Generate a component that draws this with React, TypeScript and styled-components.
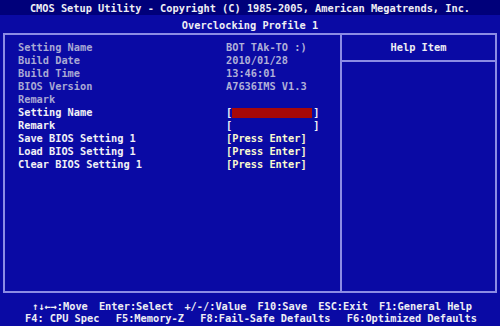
import styled, { createGlobalStyle } from "styled-components";

const GlobalStyle = createGlobalStyle`
  body {
    margin: 0;
    background: #0a0aa4;
  }
`;

const rows = [
  { label: "Setting Name", value: "BOT TAk-TO :)", dim: true },
  { label: "Build Date", value: "2010/01/28", dim: true },
  { label: "Build Time", value: "13:46:01", dim: true },
  { label: "BIOS Version", value: "A7636IMS V1.3", dim: true },
  { label: "Remark", value: "", dim: true },
];

const footerTop = ["↑↓←→:Move", "Enter:Select", "+/-/:Value", "F10:Save", "ESC:Exit", "F1:General Help"];
const footerBottom = ["F4: CPU Spec", "F5:Memory-Z", "F8:Fail-Safe Defaults", "F6:Optimized Defaults"];

const App = () => {
  return (
    <Screen>
      <GlobalStyle />
      <TitleBar>CMOS Setup Utility - Copyright (C) 1985-2005, American Megatrends, Inc.</TitleBar>
      <SubTitle>Overclocking Profile 1</SubTitle>
      <Frame>
        <MainPanel>
          {rows.map((r) => (
            <Row key={r.label}>
              <Label $dim={r.dim}>{r.label}</Label>
              <Value $dim={r.dim}>{r.value}</Value>
            </Row>
          ))}
          <Row>
            <Label>Setting Name</Label>
            <Value>
              [<Field $filled />]
            </Value>
          </Row>
          <Row>
            <Label>Remark</Label>
            <Value>
              [<Field />]
            </Value>
          </Row>
          <Row>
            <Label>Save BIOS Setting 1</Label>
            <Value $action>[Press Enter]</Value>
          </Row>
          <Row>
            <Label>Load BIOS Setting 1</Label>
            <Value $action>[Press Enter]</Value>
          </Row>
          <Row>
            <Label>Clear BIOS Setting 1</Label>
            <Value $action>[Press Enter]</Value>
          </Row>
        </MainPanel>
        <HelpPanel>
          <HelpTitle>Help Item</HelpTitle>
        </HelpPanel>
      </Frame>
      <Footer>
        <FooterLine $pad="0 28px 0 32px">
          {footerTop.map((t) => (
            <span key={t}>{t}</span>
          ))}
        </FooterLine>
        <FooterLine $pad="0 23px 0 25px">
          {footerBottom.map((t) => (
            <span key={t}>{t}</span>
          ))}
        </FooterLine>
      </Footer>
    </Screen>
  );
};

const Screen = styled.div`
  width: 500px;
  height: 326px;
  background: #0a0aa4;
  display: flex;
  flex-direction: column;
  font-family: "DejaVu Sans Mono", "Liberation Mono", monospace;
  font-weight: bold;
  font-size: 10.3px;
  color: #eeeef4;
  white-space: pre;
  overflow: hidden;
`;

const TitleBar = styled.div`
  height: 15px;
  line-height: 16px;
  background: #00007a;
  text-align: center;
`;

const SubTitle = styled.div`
  height: 18px;
  line-height: 16px;
  padding-top: 2px;
  box-sizing: border-box;
  text-align: center;
`;

const Frame = styled.div`
  margin: 0 3px;
  height: 260px;
  box-sizing: border-box;
  border: 2px solid #8c8ce4;
  display: grid;
  grid-template-columns: 335px 1fr;
`;

const MainPanel = styled.div`
  padding: 6px 0 0 13px;
  display: flex;
  flex-direction: column;
`;

const Row = styled.div`
  display: grid;
  grid-template-columns: 208px 1fr;
  height: 13px;
  line-height: 13px;
`;

const Label = styled.div<{ $dim?: boolean }>`
  color: ${({ $dim }) => ($dim ? "#a8a8d4" : "#f2f2f6")};
`;

const Value = styled.div<{ $dim?: boolean; $action?: boolean }>`
  display: flex;
  align-items: center;
  color: ${({ $dim, $action }) => ($dim ? "#b0b0d8" : $action ? "#fafad0" : "#f2f2f6")};
`;

const Field = styled.span<{ $filled?: boolean }>`
  display: inline-block;
  width: 80px;
  height: 10px;
  margin-right: 1px;
  background: ${({ $filled }) => ($filled ? "#a80808" : "transparent")};
`;

const HelpPanel = styled.div`
  border-left: 2px solid #8c8ce4;
`;

const HelpTitle = styled.div`
  height: 25px;
  line-height: 25px;
  text-align: center;
  border-bottom: 2px solid #8c8ce4;
`;

const Footer = styled.div`
  padding-top: 7px;
  display: flex;
  flex-direction: column;
`;

const FooterLine = styled.div<{ $pad: string }>`
  display: flex;
  justify-content: space-between;
  padding: ${({ $pad }) => $pad};
  height: 12px;
  line-height: 12px;
`;

export default App;
